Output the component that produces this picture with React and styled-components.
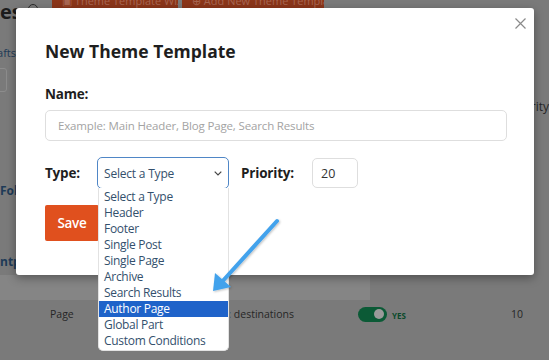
import React from 'react';
import styled, { createGlobalStyle } from 'styled-components';

const Global = createGlobalStyle`
  html, body { margin: 0; padding: 0; }
  body {
    width: 549px;
    height: 360px;
    overflow: hidden;
    background: #7a7a7a;
    font-family: "Open Sans", "Liberation Sans", sans-serif;
  }
`;

const Stage = styled.div`
  position: relative;
  width: 549px;
  height: 360px;
  overflow: hidden;
  background: #7a7a7a;
`;

/* ---------- dimmed page behind the modal ---------- */
const BgHeader = styled.div`
  display: flex;
  align-items: flex-start;
  height: 40px;
`;

const BgTitle = styled.div`
  display: flex;
  align-items: center;
  gap: 6px;
  width: 52px;
  font-size: 20px;
  font-weight: 700;
  color: #1c1c1c;
  line-height: 22px;
  margin-top: 1px;
  white-space: nowrap;
  overflow: hidden;
`;

const InfoDot = styled.span`
  display: inline-block;
  width: 8px;
  height: 8px;
  border: 1.5px solid #2a2a2a;
  border-radius: 50%;
  margin-top: -6px;
`;

const BgButton = styled.div`
  display: flex;
  align-items: flex-end;
  gap: 6px;
  width: ${p => p.$w}px;
  height: 30px;
  margin-top: -21px;
  margin-right: 4px;
  padding: 0 10px 1px;
  box-sizing: border-box;
  background: #8b3519;
  color: #a86652;
  font-size: 11px;
  white-space: nowrap;
  overflow: hidden;
`;

const BgBody = styled.div`
  display: flex;
  height: 235px;
`;

const LeftCol = styled.div`
  width: 16px;
  display: flex;
  flex-direction: column;
  overflow: hidden;
`;

const LeftLink = styled.div`
  font-size: ${p => p.$size || 11}px;
  font-weight: ${p => p.$bold ? 700 : 400};
  color: #1e3a57;
  line-height: 14px;
  white-space: nowrap;
  margin-top: ${p => p.$mt}px;
  align-self: ${p => p.$end ? 'flex-end' : 'flex-start'};
`;

const LeftBox = styled.div`
  width: 20px;
  height: 22px;
  margin-top: 8px;
  margin-left: -15px;
  border: 1px solid #8c8c8c;
  border-radius: 3px;
`;

const RightCol = styled.div`
  flex: 1;
  display: flex;
  justify-content: flex-end;
`;

const RightText = styled.div`
  display: flex;
  justify-content: flex-end;
  font-size: 12px;
  color: #262626;
  margin-top: 59px;
  width: 16px;
  overflow: hidden;
  white-space: nowrap;
  line-height: 16px;
`;

const ShadeRow = styled.div`
  width: 370px;
  height: 25px;
  background: #858585;
`;

const BgRow = styled.div`
  display: flex;
  align-items: center;
  height: 30px;
  margin-top: -1px;
  font-size: 10.5px;
  color: #262626;
`;

const Cell = styled.div`
  width: ${p => p.$w}px;
  flex: none;
  white-space: nowrap;
  overflow: hidden;
  display: flex;
  align-items: center;
  justify-content: ${p => p.$align === 'right' ? 'flex-end' : 'flex-start'};
  gap: 5px;
`;

const Toggle = styled.span`
  position: relative;
  display: inline-block;
  flex: none;
  width: 29px;
  height: 15px;
  border-radius: 8px;
  background: #0b5a36;
  &::after {
    content: '';
    position: absolute;
    right: 3px;
    top: 2.5px;
    width: 10px;
    height: 10px;
    border-radius: 50%;
    background: #9a9a9a;
  }
`;

const YesLabel = styled.span`
  font-size: 8px;
  font-weight: 700;
  color: #0b4a2c;
  margin-top: 3px;
`;

/* ---------- modal ---------- */
const Modal = styled.div`
  position: absolute;
  left: 16px;
  top: 8px;
  width: 518px;
  height: 267px;
  box-sizing: border-box;
  padding: 30px 29px 0;
  background: #fff;
  border-radius: 3px;
  box-shadow: 0 3px 10px rgba(0, 0, 0, 0.35);
  z-index: 2;
`;

const CloseBtn = styled.button`
  position: absolute;
  top: 9px;
  right: 8px;
  width: 12px;
  height: 12px;
  padding: 0;
  border: 0;
  background: none;
  display: flex;
  align-items: center;
  justify-content: center;
`;

const Title = styled.h2`
  margin: 0;
  font-size: 17.5px;
  line-height: 26px;
  font-weight: 700;
  color: #1e1e1e;
`;

const Label = styled.label`
  display: block;
  flex: none;
  font-size: 13.5px;
  letter-spacing: -0.2px;
  line-height: 20px;
  font-weight: 700;
  color: #1e1e1e;
`;

const NameLabel = styled(Label)`
  margin-top: 20px;
`;

const TextInput = styled.div`
  margin-top: 6px;
  width: 462px;
  height: 31px;
  box-sizing: border-box;
  border: 1px solid #dedede;
  border-radius: 5px;
  padding: 0 12px;
  display: flex;
  align-items: center;
  font-size: 11.5px;
  letter-spacing: -0.15px;
  color: #a3a3a3;
`;

const TypeRow = styled.div`
  margin-top: 16px;
  display: flex;
  align-items: center;
  height: 32px;
`;

const TypeLabel = styled(Label)`
  width: 52px;
`;

const PriorityLabel = styled(Label)`
  width: 71px;
  margin-left: 12px;
`;

const SelectWrap = styled.div`
  position: relative;
  flex: none;
  width: 132px;
  height: 32px;
`;

const SelectBox = styled.div`
  width: 100%;
  height: 100%;
  box-sizing: border-box;
  border: 1px solid #4f86c6;
  border-radius: 5px;
  padding: 0 6px 0 6px;
  display: flex;
  align-items: center;
  justify-content: space-between;
  font-size: 12px;
  letter-spacing: -0.2px;
  color: #34506c;
`;

const DropList = styled.ul`
  position: absolute;
  left: 1px;
  top: 31px;
  width: 131px;
  margin: 0;
  padding: 1px 0 1px;
  list-style: none;
  background: #fff;
  border: 1px solid #e2e2e2;
  border-top: 0;
  border-radius: 0 0 5px 5px;
  box-sizing: border-box;
  z-index: 3;
`;

const DropItem = styled.li`
  height: 16px;
  line-height: 16px;
  padding-left: 5px;
  font-size: 12px;
  letter-spacing: -0.3px;
  white-space: nowrap;
  color: ${p => p.$active ? '#ffffff' : '#33506d'};
  background: ${p => p.$active ? '#1f63c9' : 'transparent'};
`;

const NumberInput = styled.div`
  flex: none;
  width: 46px;
  height: 30px;
  box-sizing: border-box;
  border: 1px solid #dedede;
  border-radius: 5px;
  padding-left: 8px;
  display: flex;
  align-items: center;
  font-size: 12.5px;
  color: #333;
`;

const SaveButton = styled.button`
  margin-top: 16px;
  width: 54px;
  height: 36px;
  padding: 0;
  border: 0;
  border-radius: 2px;
  background: #e0501e;
  color: #fff;
  font-family: inherit;
  font-size: 13.5px;
  letter-spacing: -0.3px;
  font-weight: 600;
`;

const Annotation = styled.svg`
  position: absolute;
  left: 200px;
  top: 210px;
  overflow: visible;
  z-index: 4;
  pointer-events: none;
`;

const types = [
  'Select a Type', 'Header', 'Footer', 'Single Post', 'Single Page',
  'Archive', 'Search Results', 'Author Page', 'Global Part', 'Custom Conditions',
];

export default function App() {
  return (
    <>
      <Global />
      <Stage>
        <BgHeader>
          <BgTitle>es <InfoDot /></BgTitle>
          <BgButton $w={126}>▣ Theme Template Wizard</BgButton>
          <BgButton $w={142}>⊕ Add New Theme Template</BgButton>
        </BgHeader>
        <BgBody>
          <LeftCol>
            <LeftLink $mt={6} $end>Drafts</LeftLink>
            <LeftBox />
            <LeftLink $mt={92} $bold $size={12}>Follow</LeftLink>
            <LeftLink $mt={57} $bold $size={12}>ntp</LeftLink>
          </LeftCol>
          <RightCol>
            <RightText>Priority</RightText>
          </RightCol>
        </BgBody>
        <ShadeRow />
        <BgRow>
          <Cell $w={50} />
          <Cell $w={180}>Page</Cell>
          <Cell $w={64} $align="right">Archives : destinations</Cell>
          <Cell $w={64} />
          <Cell $w={153}><Toggle /><YesLabel>YES</YesLabel></Cell>
          <Cell $w={12}>10</Cell>
        </BgRow>

        <Modal>
          <CloseBtn aria-label="Close">
            <svg width="11" height="11" viewBox="0 0 11 11">
              <path d="M0.5 0.5 L10.5 10.5 M10.5 0.5 L0.5 10.5" stroke="#8a8a8a" strokeWidth="1.2" fill="none" />
            </svg>
          </CloseBtn>
          <Title>New Theme Template</Title>
          <NameLabel>Name:</NameLabel>
          <TextInput>Example: Main Header, Blog Page, Search Results</TextInput>
          <TypeRow>
            <TypeLabel>Type:</TypeLabel>
            <SelectWrap>
              <SelectBox>
                <span>Select a Type</span>
                <svg width="8" height="5" viewBox="0 0 8 5">
                  <path d="M0.7 0.7 L4 4 L7.3 0.7" stroke="#444" strokeWidth="1.2" fill="none" />
                </svg>
              </SelectBox>
              <DropList>
                {types.map(t => (
                  <DropItem key={t} $active={t === 'Author Page'}>{t}</DropItem>
                ))}
              </DropList>
            </SelectWrap>
            <PriorityLabel>Priority:</PriorityLabel>
            <NumberInput>20</NumberInput>
          </TypeRow>
          <SaveButton>Save</SaveButton>
        </Modal>

        <Annotation width="90" height="90" viewBox="0 0 90 90">
          <defs>
            <filter id="sh" x="-20%" y="-20%" width="140%" height="140%">
              <feDropShadow dx="1" dy="1" stdDeviation="1.2" floodColor="#000" floodOpacity="0.25" />
            </filter>
          </defs>
          <g filter="url(#sh)">
            <path d="M77 11 L20 74" stroke="#43a2ec" strokeWidth="4" strokeLinecap="round" fill="none" />
            <path d="M13 81 L15 63 L31 77 Z" fill="#43a2ec" />
          </g>
        </Annotation>
      </Stage>
    </>
  );
}
